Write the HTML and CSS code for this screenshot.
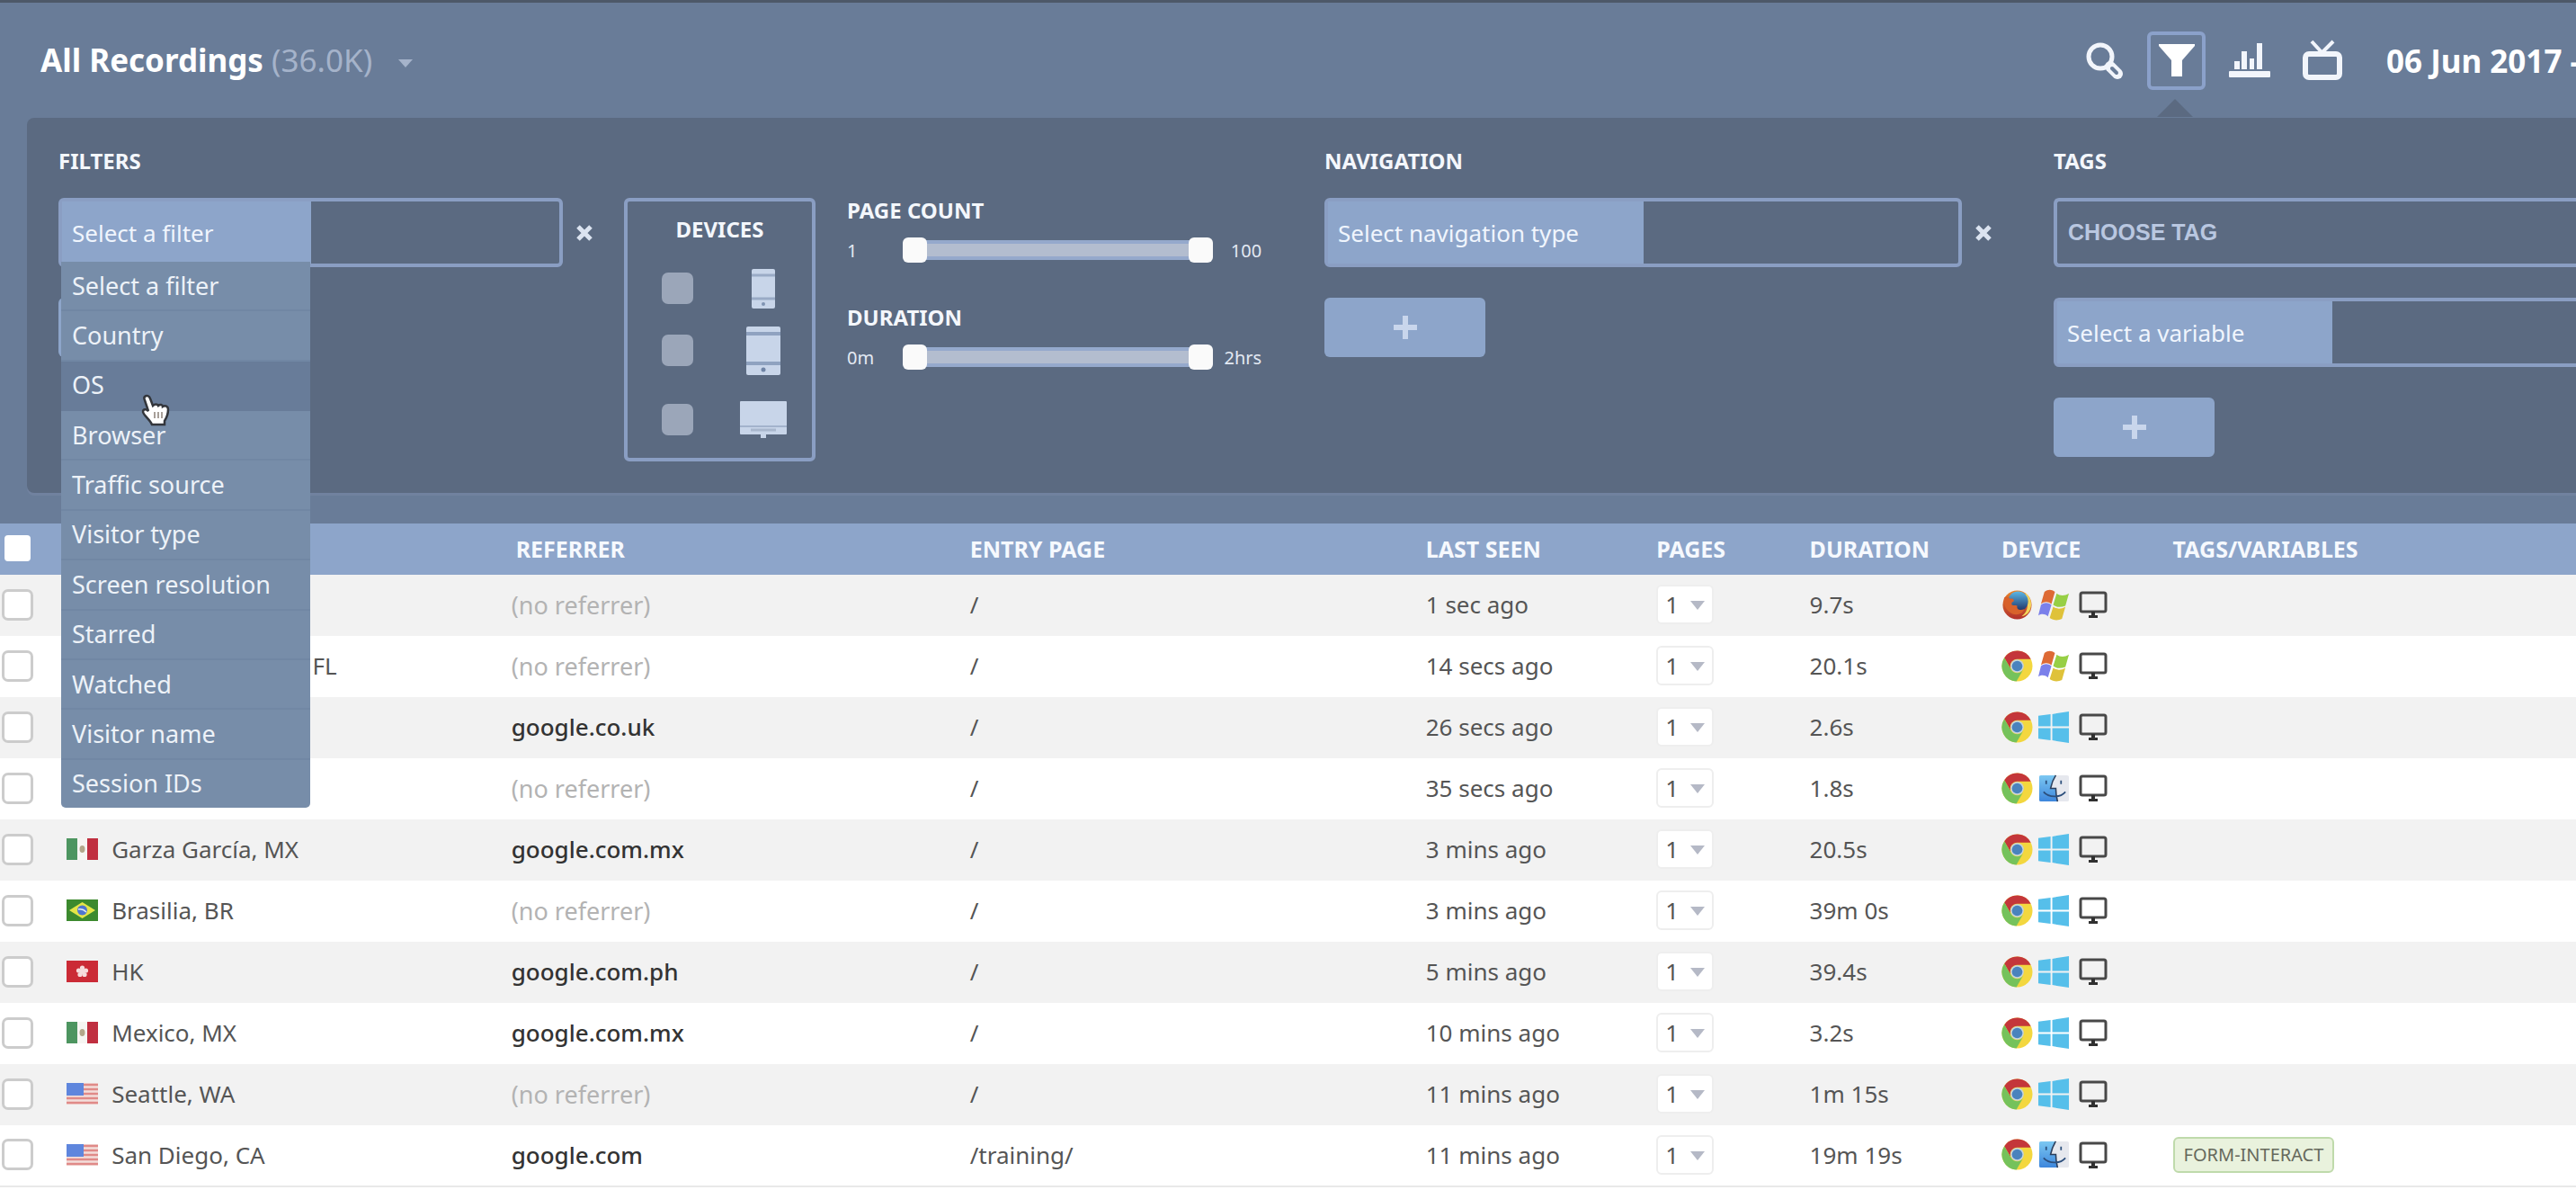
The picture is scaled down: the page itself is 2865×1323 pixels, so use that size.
FILE: index.html
```
<!DOCTYPE html>
<html lang="en">
<head>
    <meta charset="UTF-8">
    <meta name="viewport" content="width=device-width, initial-scale=1.0">
    <title>All Recordings</title>
    <link rel="stylesheet" href="styles.css">
</head>
<body>

    <!-- Icon sprite -->
    <svg class="sprite" aria-hidden="true">
        <defs>
            <linearGradient id="g-finder" x1="0" y1="0" x2="0" y2="1">
                <stop offset="0" stop-color="#7cc8f2"/>
                <stop offset="1" stop-color="#3d86dc"/>
            </linearGradient>
            <linearGradient id="g-fox" x1="0" y1="0" x2="0" y2="1">
                <stop offset="0" stop-color="#e8862c"/>
                <stop offset="1" stop-color="#b2302c"/>
            </linearGradient>
            <linearGradient id="g-globe" x1="0" y1="0" x2="0" y2="1">
                <stop offset="0" stop-color="#5cb8e6"/>
                <stop offset="1" stop-color="#1d2f63"/>
            </linearGradient>
        </defs>
        <symbol id="close" viewBox="0 0 20 20">
            <path d="M3 3L17 17M17 3L3 17" stroke="#dbe3f0" stroke-width="5" fill="none"/>
        </symbol>
        <symbol id="plus" viewBox="0 0 26 26">
            <path d="M13 0V26M0 13H26" stroke="#c9d6ec" stroke-width="6" fill="none"/>
        </symbol>
        <symbol id="firefox" viewBox="0 0 36 36">
            <circle cx="18" cy="18" r="16.5" fill="url(#g-fox)"/>
            <path d="M27 4C34 9 36 18 32 25C30 29 26 31 23 31C29 27 31 20 29 14Z" fill="#f3d65a"/>
            <circle cx="19" cy="14" r="11.5" fill="url(#g-globe)"/>
            <path d="M3 10C6 7 8 9 10 11C13 10 15 12 14 14C12 15 11 16 12 18C14 19 16 18 18 19C17 23 21 25 26 23C24 30 14 31 9 26C5 23 2 17 3 10Z" fill="#d8622b"/>
        </symbol>
        <symbol id="chrome" viewBox="0 0 36 36">
            <circle cx="18" cy="18" r="17.5" fill="#f3d73f"/>
            <path d="M18 10H33.6A17.5 17.5 0 0 0 3.3 8.5L11.1 22A8 8 0 0 1 18 10Z" fill="#c4363a"/>
            <path d="M11.1 22L3.3 8.5A17.5 17.5 0 0 0 17.1 35.5L24.9 22A8 8 0 0 1 11.1 22Z" fill="#75c25b"/>
            <circle cx="18" cy="18" r="7.5" fill="#c3d3e0"/>
            <circle cx="18" cy="18" r="6" fill="#4a83bd"/>
        </symbol>
        <symbol id="winxp" viewBox="0 0 36 36">
            <path d="M7 3C11 0 15 0 19 3L15 17C11 14 7 14 3 17Z" fill="#dd6a35"/>
            <path d="M21 5C25 8 30 8 35 5L31 19C26 21 21 21 17 18Z" fill="#97cf45"/>
            <path d="M3 18C7 15 11 15 15 18L11 31C7 28 4 28 0 30Z" fill="#7b80ea"/>
            <path d="M17 20C21 23 26 23 31 20L27 34C23 36 17 36 13 33Z" fill="#dfc23a"/>
        </symbol>
        <symbol id="win10" viewBox="0 0 36 36">
            <path d="M0 5L14 3V17H0ZM16 3L35 0V17H16ZM0 19H14V33L0 31ZM16 19H35V36L16 33Z" fill="#56bfea"/>
        </symbol>
        <symbol id="finder" viewBox="0 0 36 36">
            <rect x="1" y="3" width="34" height="30" rx="2" fill="#e6e8ee"/>
            <path d="M3 3H20C16 9 15 13 14 18H20C20 24 21 29 22 33H3A2 2 0 0 1 1 31V5A2 2 0 0 1 3 3Z" fill="url(#g-finder)"/>
            <path d="M20 3C16 9 15 13 14 18H20C20 24 21 29 22 33" stroke="#2c3f5c" stroke-width="1.6" fill="none"/>
            <path d="M6 22C12 29 25 29 31 22M9 9V13M26 9V13" stroke="#2c4f7c" stroke-width="1.8" fill="none"/>
        </symbol>
        <symbol id="desktop" viewBox="0 0 32 32">
            <rect x="2" y="3" width="28" height="21" rx="2" fill="none" stroke="#484848" stroke-width="3"/>
            <path d="M14 24H18V28H21V31H11V28H14Z" fill="#303030"/>
        </symbol>
        <symbol id="flag-mx" viewBox="0 0 35 24">
            <rect width="35" height="24" fill="#f6f5f2"/>
            <rect width="12" height="24" fill="#4d9560"/>
            <rect x="23" width="12" height="24" fill="#c02f40"/>
            <ellipse cx="17.500" cy="12" rx="3" ry="4" fill="#b3a78a"/>
        </symbol>
        <symbol id="flag-br" viewBox="0 0 35 24">
            <rect width="35" height="24" fill="#3c8a2e"/>
            <path d="M3 12L17.500 3L32 12L17.500 21Z" fill="#e3e548"/>
            <circle cx="17.500" cy="12" r="5.500" fill="#4f76cf"/>
            <path d="M13 11Q18 10 22 14" stroke="#dfe8f6" stroke-width="1.500" fill="none"/>
        </symbol>
        <symbol id="flag-hk" viewBox="0 0 35 24">
            <rect width="35" height="24" fill="#cb2b36"/>
            <g fill="#f6dcdc">
                <circle cx="17.500" cy="8" r="2.600"/>
                <circle cx="21.500" cy="11" r="2.600"/>
                <circle cx="20" cy="15.500" r="2.600"/>
                <circle cx="15" cy="15.500" r="2.600"/>
                <circle cx="13.500" cy="11" r="2.600"/>
                <circle cx="17.500" cy="12" r="3"/>
            </g>
        </symbol>
        <symbol id="flag-us" viewBox="0 0 35 24">
            <rect width="35" height="24" fill="#f3dedb"/>
            <path d="M0 2H35M0 7H35M0 12H35M0 17H35M0 22H35" stroke="#e08a88" stroke-width="2.500"/>
            <rect width="19" height="14" fill="#5f86dd"/>
        </symbol>
    </svg>

    <div class="head">
    <header class="topbar">
        <h1 class="title">All Recordings <span class="count">(36.0K)</span></h1>
        <button class="title-toggle" aria-label="Choose recordings list"></button>

        <div class="actions">
            <button class="icon-btn" aria-label="Search">
                <svg width="44" height="44" viewBox="0 0 44 44" fill="none" stroke="#f2f5fb">
                    <circle cx="18" cy="18" r="13" stroke-width="5"/>
                    <path d="M29 29L37 37" stroke-width="12" stroke-linecap="round"/>
                    <path d="M31 31L36 36" stroke="#697c98" stroke-width="4" stroke-linecap="round"/>
                </svg>
            </button>
            <button class="icon-btn active" aria-label="Filters">
                <svg width="40" height="38" viewBox="0 0 40 38" fill="#fff">
                    <path d="M0 1H40V3L26 19V37H14V19L0 3Z"/>
                </svg>
            </button>
            <button class="icon-btn" aria-label="Statistics">
                <svg width="46" height="40" viewBox="0 0 46 40" fill="#f2f5fb">
                    <path d="M6 21H12V30H6ZM14 10H20V30H14ZM23 18H28V30H23ZM31 1H37V30H31Z"/>
                    <rect y="32" width="46" height="7" rx="1"/>
                </svg>
            </button>
            <button class="icon-btn" aria-label="Live view">
                <svg width="46" height="46" viewBox="0 0 46 46" fill="none" stroke="#f2f5fb">
                    <rect x="4" y="16" width="38" height="26" rx="4" stroke-width="6"/>
                    <path d="M11 2L22 14M35 2L23 14" stroke-width="4"/>
                </svg>
            </button>
            <span class="date">06 Jun 2017 -</span>
        </div>
    </header>

    <section class="filters">

        <!-- Filters -->
        <div class="filter-col col-filters">
            <h2>FILTERS</h2>
            <div class="field-row">
                <div class="field">
                    <select class="field-type type-filter" aria-label="Filter">
                        <option>Select a filter</option>
                    </select>
                    <input type="text" class="field-value" aria-label="Filter value">
                    <ul class="menu">
                        <li>Select a filter</li>
                        <li>Country</li>
                        <li class="hover">OS</li>
                        <li>Browser</li>
                        <li>Traffic source</li>
                        <li>Visitor type</li>
                        <li>Screen resolution</li>
                        <li>Starred</li>
                        <li>Watched</li>
                        <li>Visitor name</li>
                        <li>Session IDs</li>
                    </ul>
                    <svg class="pointer" width="32" height="36" viewBox="0 0 32 36">
                        <path d="M4 3C6 1 9 2 10 5L13 13C15 11 18 11 19 13C21 11 24 12 24 14C27 12 30 14 30 17C30 24 28 27 26 30V34H12C10 29 3 24 2 20C2 17 5 16 8 19L4 7C3 5 3 4 4 3Z" fill="#fff" stroke="#33363c" stroke-width="2.500"/>
                        <path d="M15 20V27M19 20V27M23 20V27" stroke="#8b8078" stroke-width="1.500"/>
                    </svg>
                </div>
                <button class="remove" aria-label="Remove filter"><svg width="20" height="20"><use href="#close"/></svg></button>
            </div>
            <button class="add" aria-label="Add filter"><svg width="26" height="26"><use href="#plus"/></svg></button>
        </div>

        <!-- Devices -->
        <div class="filter-col">
            <fieldset class="devices">
                <h2>DEVICES</h2>
                <label>
                    <input type="checkbox" aria-label="Phone">
                    <svg width="52" height="44" viewBox="0 0 52 44">
                        <rect x="13" width="26" height="44" rx="2" fill="#c8d5e9"/>
                        <path d="M13 7H39M13 33H39" stroke="#9aabc6" stroke-width="3"/>
                        <circle cx="26" cy="39" r="2" fill="#7f93b2"/>
                    </svg>
                </label>
                <label>
                    <input type="checkbox" aria-label="Tablet">
                    <svg width="52" height="54" viewBox="0 0 52 54">
                        <rect x="7" width="38" height="54" rx="2" fill="#c8d5e9"/>
                        <path d="M7 8H45M7 41H45" stroke="#8fa2c0" stroke-width="4"/>
                        <circle cx="26" cy="48" r="2.500" fill="#6f84a5"/>
                    </svg>
                </label>
                <label>
                    <input type="checkbox" aria-label="Desktop">
                    <svg width="52" height="42" viewBox="0 0 52 42">
                        <rect width="52" height="37" rx="1" fill="#c8d5e9"/>
                        <path d="M0 28H52" stroke="#a3b3cc" stroke-width="2"/>
                        <path d="M12 32H40" stroke="#a9b7cd" stroke-width="3"/>
                        <path d="M23 37H29V41H23Z" fill="#c8d5e9"/>
                    </svg>
                </label>
            </fieldset>
        </div>

        <!-- Ranges -->
        <div class="filter-col col-ranges">
            <h3>PAGE COUNT</h3>
            <div class="range">
                <span class="from">1</span>
                <div class="track">
                    <input type="range" min="1" max="100" value="1" aria-label="Page count from">
                    <input type="range" min="1" max="100" value="100" aria-label="Page count to">
                </div>
                <span class="to">100</span>
            </div>
            <h3>DURATION</h3>
            <div class="range">
                <span class="from">0m</span>
                <div class="track">
                    <input type="range" min="0" max="120" value="0" aria-label="Duration from">
                    <input type="range" min="0" max="120" value="120" aria-label="Duration to">
                </div>
                <span class="to">2hrs</span>
            </div>
        </div>

        <!-- Navigation -->
        <div class="filter-col col-navigation">
            <h2>NAVIGATION</h2>
            <div class="field-row">
                <div class="field">
                    <select class="field-type type-navigation" aria-label="Navigation type">
                        <option>Select navigation type</option>
                    </select>
                    <input type="text" class="field-value" aria-label="Navigation value">
                </div>
                <button class="remove" aria-label="Remove navigation"><svg width="20" height="20"><use href="#close"/></svg></button>
            </div>
            <button class="add" aria-label="Add navigation"><svg width="26" height="26"><use href="#plus"/></svg></button>
        </div>

        <!-- Tags -->
        <div class="filter-col col-tags">
            <h2>TAGS</h2>
            <div class="field-row">
                <input type="text" class="tag-input" placeholder="CHOOSE TAG" aria-label="Tag">
            </div>
            <div class="field-row">
                <div class="field">
                    <select class="field-type type-variable" aria-label="Variable">
                        <option>Select a variable</option>
                    </select>
                    <input type="text" class="field-value" aria-label="Variable value">
                </div>
            </div>
            <button class="add" aria-label="Add variable"><svg width="26" height="26"><use href="#plus"/></svg></button>
        </div>
    </section>
    </div>

    <table class="recordings">
        <colgroup>
            <col class="c-check">
            <col class="c-location">
            <col class="c-referrer">
            <col class="c-entry">
            <col class="c-seen">
            <col class="c-pages">
            <col class="c-duration">
            <col class="c-device">
            <col>
        </colgroup>
        <thead>
            <tr>
                <th><input type="checkbox" aria-label="Select all"></th>
                <th></th>
                <th class="th-referrer">REFERRER</th>
                <th>ENTRY PAGE</th>
                <th>LAST SEEN</th>
                <th>PAGES</th>
                <th>DURATION</th>
                <th>DEVICE</th>
                <th>TAGS/VARIABLES</th>
            </tr>
        </thead>
        <tbody>
            <tr>
                <td><input type="checkbox" aria-label="Select recording"></td>
                <td></td>
                <td class="none">(no referrer)</td>
                <td>/</td>
                <td>1 sec ago</td>
                <td><span class="pages"><select aria-label="Pages"><option>1</option></select></span></td>
                <td>9.7s</td>
                <td><div class="device"><svg><use href="#firefox"/></svg><svg><use href="#winxp"/></svg><svg class="screen"><use href="#desktop"/></svg></div></td>
                <td></td>
            </tr>
            <tr>
                <td><input type="checkbox" aria-label="Select recording"></td>
                <td><div class="location"><svg><use href="#flag-us"/></svg>West Palm Beach, FL</div></td>
                <td class="none">(no referrer)</td>
                <td>/</td>
                <td>14 secs ago</td>
                <td><span class="pages"><select aria-label="Pages"><option>1</option></select></span></td>
                <td>20.1s</td>
                <td><div class="device"><svg><use href="#chrome"/></svg><svg><use href="#winxp"/></svg><svg class="screen"><use href="#desktop"/></svg></div></td>
                <td></td>
            </tr>
            <tr>
                <td><input type="checkbox" aria-label="Select recording"></td>
                <td></td>
                <td class="site">google.co.uk</td>
                <td>/</td>
                <td>26 secs ago</td>
                <td><span class="pages"><select aria-label="Pages"><option>1</option></select></span></td>
                <td>2.6s</td>
                <td><div class="device"><svg><use href="#chrome"/></svg><svg><use href="#win10"/></svg><svg class="screen"><use href="#desktop"/></svg></div></td>
                <td></td>
            </tr>
            <tr>
                <td><input type="checkbox" aria-label="Select recording"></td>
                <td></td>
                <td class="none">(no referrer)</td>
                <td>/</td>
                <td>35 secs ago</td>
                <td><span class="pages"><select aria-label="Pages"><option>1</option></select></span></td>
                <td>1.8s</td>
                <td><div class="device"><svg><use href="#chrome"/></svg><svg><use href="#finder"/></svg><svg class="screen"><use href="#desktop"/></svg></div></td>
                <td></td>
            </tr>
            <tr>
                <td><input type="checkbox" aria-label="Select recording"></td>
                <td><div class="location"><svg><use href="#flag-mx"/></svg>Garza García, MX</div></td>
                <td class="site">google.com.mx</td>
                <td>/</td>
                <td>3 mins ago</td>
                <td><span class="pages"><select aria-label="Pages"><option>1</option></select></span></td>
                <td>20.5s</td>
                <td><div class="device"><svg><use href="#chrome"/></svg><svg><use href="#win10"/></svg><svg class="screen"><use href="#desktop"/></svg></div></td>
                <td></td>
            </tr>
            <tr>
                <td><input type="checkbox" aria-label="Select recording"></td>
                <td><div class="location"><svg><use href="#flag-br"/></svg>Brasilia, BR</div></td>
                <td class="none">(no referrer)</td>
                <td>/</td>
                <td>3 mins ago</td>
                <td><span class="pages"><select aria-label="Pages"><option>1</option></select></span></td>
                <td>39m 0s</td>
                <td><div class="device"><svg><use href="#chrome"/></svg><svg><use href="#win10"/></svg><svg class="screen"><use href="#desktop"/></svg></div></td>
                <td></td>
            </tr>
            <tr>
                <td><input type="checkbox" aria-label="Select recording"></td>
                <td><div class="location"><svg><use href="#flag-hk"/></svg>HK</div></td>
                <td class="site">google.com.ph</td>
                <td>/</td>
                <td>5 mins ago</td>
                <td><span class="pages"><select aria-label="Pages"><option>1</option></select></span></td>
                <td>39.4s</td>
                <td><div class="device"><svg><use href="#chrome"/></svg><svg><use href="#win10"/></svg><svg class="screen"><use href="#desktop"/></svg></div></td>
                <td></td>
            </tr>
            <tr>
                <td><input type="checkbox" aria-label="Select recording"></td>
                <td><div class="location"><svg><use href="#flag-mx"/></svg>Mexico, MX</div></td>
                <td class="site">google.com.mx</td>
                <td>/</td>
                <td>10 mins ago</td>
                <td><span class="pages"><select aria-label="Pages"><option>1</option></select></span></td>
                <td>3.2s</td>
                <td><div class="device"><svg><use href="#chrome"/></svg><svg><use href="#win10"/></svg><svg class="screen"><use href="#desktop"/></svg></div></td>
                <td></td>
            </tr>
            <tr>
                <td><input type="checkbox" aria-label="Select recording"></td>
                <td><div class="location"><svg><use href="#flag-us"/></svg>Seattle, WA</div></td>
                <td class="none">(no referrer)</td>
                <td>/</td>
                <td>11 mins ago</td>
                <td><span class="pages"><select aria-label="Pages"><option>1</option></select></span></td>
                <td>1m 15s</td>
                <td><div class="device"><svg><use href="#chrome"/></svg><svg><use href="#win10"/></svg><svg class="screen"><use href="#desktop"/></svg></div></td>
                <td></td>
            </tr>
            <tr>
                <td><input type="checkbox" aria-label="Select recording"></td>
                <td><div class="location"><svg><use href="#flag-us"/></svg>San Diego, CA</div></td>
                <td class="site">google.com</td>
                <td>/training/</td>
                <td>11 mins ago</td>
                <td><span class="pages"><select aria-label="Pages"><option>1</option></select></span></td>
                <td>19m 19s</td>
                <td><div class="device"><svg><use href="#chrome"/></svg><svg><use href="#finder"/></svg><svg class="screen"><use href="#desktop"/></svg></div></td>
                <td><span class="tag">FORM-INTERACT</span></td>
            </tr>
        </tbody>
    </table>

</body>
</html>
```
FILE: styles.css
```
* {
    box-sizing: border-box;
}

body {
    margin: 0;
    font-family: "Noto Sans", "Open Sans", sans-serif;
    font-size: 26px;
    color: #555;
    background-color: #fff;
}

button, input, select {
    margin: 0;
    padding: 0;
    border: none;
    font-family: inherit;
    font-size: inherit;
    color: inherit;
    background: none;
    appearance: none;
}

button {
    display: flex;
    align-items: center;
    justify-content: center;
    cursor: pointer;
}

h1, h2, h3 {
    margin: 0;
}

.sprite {
    position: absolute;
    width: 0;
    height: 0;
}

.head {
    padding-bottom: 34px;
    background-color: #697c98;
}

/* Top bar */
.topbar {
    display: flex;
    align-items: center;
    height: 131px;
    padding-left: 45px;
    border-top: 3px solid #4d5868;
}

.title {
    padding-bottom: 2px;
    font-size: 35px;
    color: #fff;
}

.count {
    font-weight: normal;
    color: #a5b3ca;
}

.title-toggle::after {
    content: "";
    margin: 6px 0 0 29px;
    border: 8px solid transparent;
    border-top: 9px solid #a5b3ca;
    border-bottom: none;
}

.actions {
    display: flex;
    align-items: center;
    gap: 16px;
    margin-left: auto;
}

.icon-btn {
    position: relative;
    width: 65px;
    height: 65px;
    border: 4px solid transparent;
    border-radius: 6px;
}

.icon-btn.active {
    border-color: #8ba1ca;
}

/* Arrow that ties the open panel to its button */
.icon-btn.active::after {
    content: "";
    position: absolute;
    top: 71px;
    left: 50%;
    margin-left: -22px;
    border: 20px solid transparent;
    border-top: none;
    border-bottom-color: #5b6a81;
}

.date {
    width: 211px;
    margin-left: 23px;
    overflow: hidden;
    white-space: nowrap;
    font-size: 35px;
    font-weight: bold;
    color: #fff;
}

/* Filter panel */
.filters {
    display: grid;
    grid-template-columns: 629fr 248fr 531fr 811fr 581fr;
    margin-left: 30px;
    padding: 33px 0 35px 35px;
    background-color: #5b6a81;
    border-radius: 8px 0 0 8px;
    box-shadow: 0 3px 0 #71829f;
}

.filters h2, .filters h3 {
    font-size: 24px;
    line-height: 30px;
    color: #f4f7fc;
}

.filters h2 {
    margin-bottom: 26px;
}

.filter-col {
    min-width: 0;
}

.col-filters {
    padding-right: 20px;
}

.col-navigation {
    padding-right: 54px;
}

.field-row {
    display: flex;
    align-items: center;
    margin-bottom: 34px;
}

.field {
    position: relative;
    display: flex;
    flex: 1;
    height: 77px;
    min-width: 0;
    border: 4px solid #8a9ec3;
    border-radius: 6px;
}

.field-type {
    padding-left: 11px;
    background-color: #8da5ca;
    color: #f0f5fd;
}

.type-filter {
    width: 50%;
}

.type-navigation {
    width: 50%;
}

.type-variable {
    width: 53%;
}

.field-value {
    flex: 1;
    min-width: 0;
    padding: 0 11px;
}

.remove {
    width: 48px;
    height: 48px;
}

.add {
    width: 179px;
    height: 66px;
    background-color: #8da5ca;
    border-radius: 6px;
}

.menu {
    position: absolute;
    z-index: 2;
    top: 67px;
    left: -1px;
    display: flex;
    flex-direction: column;
    width: 50%;
    height: 607px;
    margin: 0;
    padding: 0;
    list-style: none;
    font-size: 27px;
    line-height: 36px;
    color: #edf2f8;
    background-color: #778da9;
    border-radius: 0 0 5px 5px;
}

.menu li {
    display: flex;
    flex: 1;
    align-items: center;
    padding-left: 12px;
    border-bottom: 2px solid #7187a4;
}

.menu li:last-child {
    border-bottom: none;
}

.menu .hover {
    background-color: #687c99;
    border-bottom-color: #687c99;
}

.pointer {
    position: absolute;
    z-index: 3;
    top: 214px;
    left: 88px;
}

.devices {
    width: 213px;
    margin: 56px 0 0;
    padding: 0;
    border: 4px solid #8a9ec3;
    border-radius: 6px;
}

.filters .devices h2 {
    margin: 0;
    line-height: 62px;
    text-align: center;
}

.devices label {
    display: flex;
    align-items: center;
    justify-content: space-between;
    height: 69px;
    padding: 0 28px 0 38px;
}

.devices label:last-child {
    height: 85px;
}

.devices input {
    width: 35px;
    height: 35px;
    background-color: #9ba6b9;
    border-radius: 7px;
}

.col-ranges {
    padding-top: 55px;
}

.range {
    display: flex;
    align-items: center;
    height: 36px;
    margin: 11px 0 42px;
    font-size: 20px;
    color: #e3e9f3;
}

.from {
    width: 62px;
}

.to {
    width: 54px;
    text-align: right;
}

/* Two range inputs share one track */
.track {
    position: relative;
    width: 65%;
    height: 22px;
    background-color: #b3bdcf;
    border: 4px solid #95a9cc;
    border-radius: 5px;
}

.track input {
    position: absolute;
    top: -7px;
    left: -4px;
    width: calc(100% + 8px);
    height: 28px;
    pointer-events: none;
}

.track input::-webkit-slider-thumb {
    appearance: none;
    width: 27px;
    height: 28px;
    background-color: #fafafa;
    border-radius: 6px;
    pointer-events: auto;
}

.tag-input {
    flex: 1;
    min-width: 0;
    height: 77px;
    padding-left: 12px;
    border: 4px solid #8a9ec3;
    border-right: none;
    border-radius: 6px 0 0 6px;
    font-family: "Liberation Sans", Arial, sans-serif;
    font-size: 25px;
    font-weight: bold;
}

.tag-input::placeholder {
    color: #b9c7e0;
    opacity: 1;
}

.col-tags .field {
    border-right: none;
    border-radius: 6px 0 0 6px;
}

/* Recordings table */
.recordings {
    width: 100%;
    table-layout: fixed;
    border-collapse: collapse;
    border-bottom: 2px solid #e9e9e9;
}

.c-check { width: 2.1%; }
.c-location { width: 17.75%; }
.c-referrer { width: 17.8%; }
.c-entry { width: 17.7%; }
.c-seen { width: 8.95%; }
.c-pages { width: 5.95%; }
.c-duration { width: 7.45%; }
.c-device { width: 6.65%; }

.recordings th {
    height: 57px;
    padding: 0 0 2px;
    font-size: 25px;
    line-height: 32px;
    text-align: left;
    color: #f6f9fe;
    background-color: #8da5ca;
}

.recordings .th-referrer {
    padding-left: 5px;
}

.recordings td {
    height: 68px;
    padding: 0 0 2px;
    white-space: nowrap;
}

.recordings tbody tr:nth-child(odd) {
    background-color: #f2f2f2;
}

.recordings input {
    display: block;
    width: 35px;
    height: 35px;
    margin-left: 2px;
    background-color: #fff;
    border: 3px solid #ccc;
    border-radius: 7px;
}

.recordings th input {
    border-color: #8da5ca;
}

.location {
    display: flex;
    align-items: center;
    gap: 15px;
    padding-left: 14px;
}

.location svg {
    width: 35px;
    height: 24px;
}

.recordings .none {
    font-size: 27px;
    color: #b3b3b3;
}

.recordings .site {
    font-weight: 500;
    color: #333;
}

.pages {
    position: relative;
    display: block;
    width: 64px;
    height: 44px;
}

.pages select {
    width: 100%;
    height: 100%;
    padding-left: 8px;
    background-color: #fff;
    border: 2px solid #eee;
    border-radius: 6px;
}

.pages::after {
    content: "";
    position: absolute;
    top: 18px;
    right: 10px;
    border: 8px solid transparent;
    border-top: 10px solid #b5b9c6;
    border-bottom: none;
    pointer-events: none;
}

.device {
    display: flex;
    align-items: center;
    gap: 6px;
}

.device svg {
    width: 35px;
    height: 35px;
}

.device .screen {
    width: 32px;
    height: 32px;
    margin-left: 4px;
}

.tag {
    display: inline-block;
    padding: 0 10px;
    font-size: 20px;
    line-height: 36px;
    color: #66695c;
    background-color: #e9f2dd;
    border: 2px solid #bfdaab;
    border-radius: 6px;
}
```
